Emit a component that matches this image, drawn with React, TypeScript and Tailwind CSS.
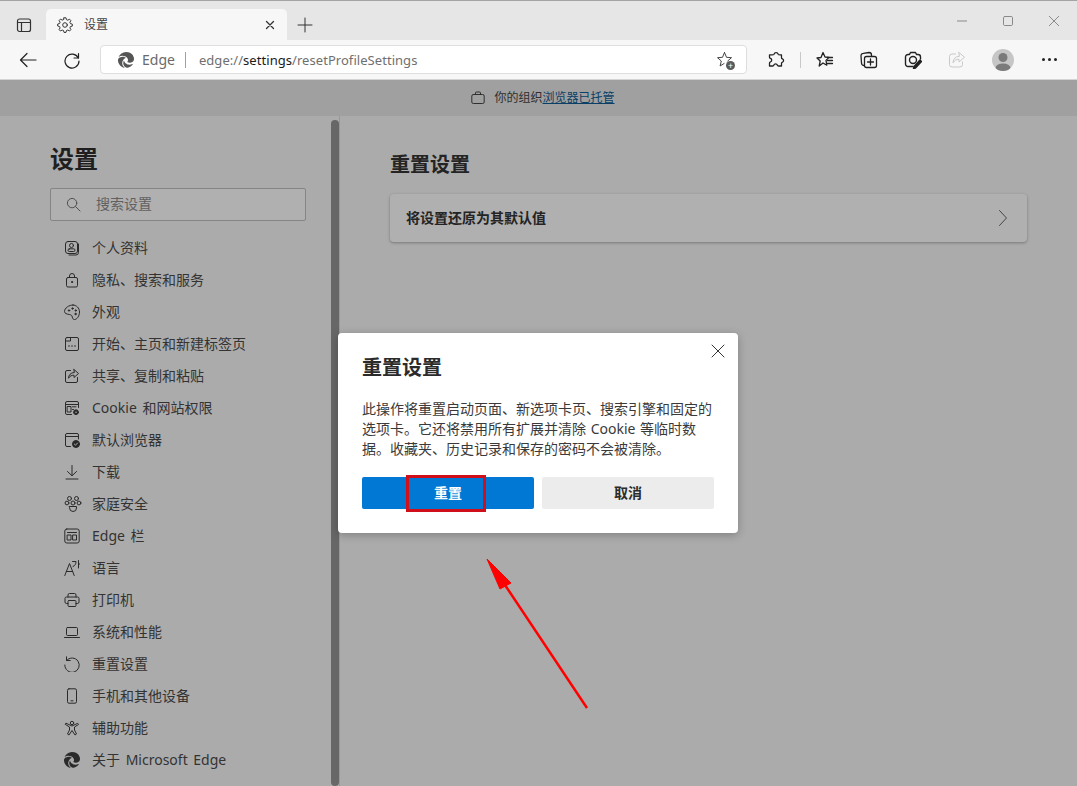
import type { ReactNode } from "react"

const fontStack = { fontFamily: '"Noto Sans", "Noto Sans CJK SC", sans-serif' }

function Ico({ size = 16, view = 16, sw = 1, children }: { size?: number; view?: number; sw?: number; children: ReactNode }) {
  return (
    <svg
      width={size}
      height={size}
      viewBox={`0 0 ${view} ${view}`}
      fill="none"
      stroke="currentColor"
      strokeWidth={sw}
      strokeLinecap="round"
      strokeLinejoin="round"
      className="shrink-0"
    >
      {children}
    </svg>
  )
}

function EdgeLogo({ className }: { className?: string }) {
  return (
    <svg width="16" height="16" viewBox="0 0 24 24" fill="currentColor" className={className}>
      <path d="M21.86 17.86q.14 0 .25.12.1.13.1.25t-.11.33l-.32.46-.43.53-.44.5q-.21.25-.38.42l-.22.23q-.58.53-1.34 1.04-.76.51-1.6.91-.86.4-1.74.64t-1.67.24q-.9 0-1.69-.28-.8-.28-1.48-.78-.68-.5-1.22-1.17-.53-.66-.92-1.44-.38-.77-.58-1.6-.2-.83-.2-1.67 0-1 .32-1.96.33-.97.87-1.8.14.95.55 1.77.41.82 1.02 1.5.6.68 1.38 1.21.78.54 1.64.9.86.36 1.77.56.92.2 1.8.2 1.12 0 2.18-.24 1.06-.23 2.06-.72l.2-.1.2-.05zm-15.5-1.27q0 1.1.27 2.15.27 1.06.78 2.03.51.96 1.24 1.77.74.82 1.66 1.4-1.47-.2-2.8-.74-1.33-.55-2.48-1.37-1.15-.83-2.08-1.9-.92-1.07-1.58-2.33T.36 14.94Q0 13.54 0 12.06q0-.81.32-1.49.31-.68.83-1.23.53-.55 1.2-.96.66-.4 1.35-.66.74-.27 1.5-.39.78-.12 1.55-.12.7 0 1.42.1.72.12 1.4.35.68.23 1.32.57.63.35 1.16.83-.35 0-.7.07-.33.07-.65.23v-.02q-.63.28-1.2.74-.57.46-1.05 1.04-.48.58-.87 1.26-.38.67-.65 1.39-.27.71-.42 1.44-.15.72-.15 1.38zM11.96.06q1.7 0 3.33.39 1.63.38 3.07 1.15 1.43.77 2.62 1.93 1.18 1.16 1.98 2.7.49.94.76 1.96.28 1 .28 2.08 0 .89-.23 1.7-.24.8-.69 1.48-.45.68-1.1 1.22-.64.53-1.45.88-.54.24-1.11.36-.58.13-1.16.13-.42 0-.97-.03-.54-.03-1.1-.12-.55-.1-1.05-.28-.5-.19-.84-.5-.12-.09-.23-.24-.1-.16-.1-.33 0-.15.16-.35.16-.2.35-.5.2-.28.36-.68.16-.4.16-.95 0-1.06-.4-1.96-.4-.91-1.06-1.64-.66-.74-1.52-1.28-.86-.55-1.79-.89-.84-.3-1.72-.44-.87-.14-1.76-.14-1.55 0-3.06.45T.94 7.55q.71-1.74 1.81-3.13 1.1-1.38 2.52-2.35Q6.68 1.1 8.37.58q1.7-.52 3.58-.52Z" />
    </svg>
  )
}

const gear =
  "M7 .8h2l.5 1.9 1.3.5 1.7-1 1.4 1.4-1 1.7.5 1.3 1.9.5v2l-1.900.5-.5 1.300 1 1.700-1.400 1.400-1.700-1-1.300.5-.5 1.900H7l-.5-1.900-1.300-.5-1.700 1-1.400-1.400 1-1.700-.5-1.300L.7 9V7l1.900-.5.5-1.300-1-1.700 1.400-1.400 1.700 1 1.300-.5z"

const navItems: { label: string; icon: ReactNode }[] = [
  {
    label: "个人资料",
    icon: (
      <Ico>
        <rect x="1.5" y="1.5" width="12" height="12" rx="2.5" />
        <path d="M14.5 4v8.5a2.5 2.5 0 0 1-2.5 2.5H5" />
        <circle cx="7.5" cy="5.5" r="2" />
        <rect x="4" y="8.8" width="7" height="2.7" rx="1.3" />
      </Ico>
    ),
  },
  {
    label: "隐私、搜索和服务",
    icon: (
      <Ico>
        <rect x="2.5" y="5.5" width="11" height="9.5" rx="1.5" />
        <path d="M5.5 5.5V4a2.5 2.5 0 0 1 5 0v1.5" />
        <circle cx="8" cy="10" r=".6" fill="currentColor" />
      </Ico>
    ),
  },
  {
    label: "外观",
    icon: (
      <Ico>
        <path d="M9 1c3.500 0 6.500 3 6.500 7s-2.500 7.500-5 7.500c-1.500 0-2-1.200-2.200-2.500-.3-1.800-1.300-2.200-3-2.500C3 10.200.5 9.500.5 7.500.5 4 5 1 9 1z" />
        <circle cx="5" cy="6.500" r=".7" fill="currentColor" />
        <circle cx="8.500" cy="4.500" r=".7" fill="currentColor" />
        <circle cx="11.800" cy="6.500" r=".7" fill="currentColor" />
        <circle cx="11.500" cy="10" r=".7" fill="currentColor" />
      </Ico>
    ),
  },
  {
    label: "开始、主页和新建标签页",
    icon: (
      <Ico>
        <rect x="1.5" y="1.5" width="13" height="13" rx="1.5" />
        <path d="M1.5 5h5V1.5" />
        <path d="M5 10h.01M8 10h.01M11 10h.01" strokeWidth="1.6" />
      </Ico>
    ),
  },
  {
    label: "共享、复制和粘贴",
    icon: (
      <Ico>
        <path d="M6.5 2.5H3A1.5 1.5 0 0 0 1.5 4v9A1.5 1.5 0 0 0 3 14.5h9a1.5 1.5 0 0 0 1.5-1.5V9.500" />
        <path d="M10 1.500l4.500 4-4.500 4V7.200c-2.500 0-4 .8-5.500 3 .2-3.200 2-5.500 5.500-5.700z" />
      </Ico>
    ),
  },
  {
    label: "Cookie 和网站权限",
    icon: (
      <Ico>
        <path d="M7.5 14.5H3A1.5 1.5 0 0 1 1.5 13V3A1.5 1.5 0 0 1 3 1.5h10A1.5 1.5 0 0 1 14.5 3v4.5" />
        <path d="M1.5 4.5h13" />
        <rect x="3.5" y="6.5" width="3.5" height="5.5" />
        <path d="M8.5 6.800h3.500M8.500 9.500h1" />
        <circle cx="12" cy="12.200" r="2.400" fill="currentColor" />
        <circle cx="12" cy="12.200" r=".8" fill="#ababab" stroke="none" />
      </Ico>
    ),
  },
  {
    label: "默认浏览器",
    icon: (
      <Ico>
        <path d="M6.5 14.5H3A1.5 1.5 0 0 1 1.5 13V3A1.5 1.5 0 0 1 3 1.5h10A1.5 1.5 0 0 1 14.5 3v4" />
        <path d="M1.5 4.5h13" />
        <circle cx="12" cy="12" r="3.5" fill="currentColor" />
        <path d="M10.300 12l1.200 1.200 2-2.200" stroke="#ababab" />
      </Ico>
    ),
  },
  {
    label: "下载",
    icon: (
      <Ico>
        <path d="M8 1.500v10M3.500 7.500L8 11.800l4.500-4.300M2 15h12" />
      </Ico>
    ),
  },
  {
    label: "家庭安全",
    icon: (
      <Ico size={18} view={18}>
        <circle cx="5.500" cy="3.500" r="2" />
        <circle cx="12.500" cy="3.500" r="2" />
        <circle cx="9" cy="8" r="2" />
        <circle cx="3" cy="8" r="1.900" />
        <circle cx="15" cy="8" r="1.900" />
        <path d="M5.500 11.500h7v1.500a3.500 3.500 0 0 1-7 0z" />
      </Ico>
    ),
  },
  {
    label: "Edge 栏",
    icon: (
      <Ico>
        <rect x=".8" y="1" width="14.4" height="14" rx="2" />
        <path d="M3.500 4.500h9" />
        <rect x="3.500" y="7" width="3.500" height="5" />
        <rect x="9" y="7" width="3.500" height="5" />
      </Ico>
    ),
  },
  {
    label: "语言",
    icon: (
      <Ico>
        <path d="M.8 15.500L5.500 3.500l4.700 12M2.300 11.500h6.400" />
        <path d="M8.500 1.500h3.500c0 2.500-1 4.200-3 5M14.500.5v7.500M14.500 4H16" />
      </Ico>
    ),
  },
  {
    label: "打印机",
    icon: (
      <Ico>
        <path d="M4 5V3a1.500 1.500 0 0 1 1.500-1.500h5A1.500 1.500 0 0 1 12 3v2" />
        <path d="M4 11.500H2.500A1.500 1.500 0 0 1 1 10V6.500A1.500 1.500 0 0 1 2.500 5h11A1.500 1.500 0 0 1 15 6.500V10a1.500 1.500 0 0 1-1.500 1.500H12" />
        <rect x="4" y="8.500" width="8" height="6" rx="1" />
      </Ico>
    ),
  },
  {
    label: "系统和性能",
    icon: (
      <Ico>
        <rect x="2.500" y="3.500" width="11" height="8" rx="1" />
        <path d="M.5 13.500h15" />
      </Ico>
    ),
  },
  {
    label: "重置设置",
    icon: (
      <Ico>
        <path d="M2.500 .8v3.700h3.700" />
        <path d="M2.500 4.500A7.200 7.200 0 1 1 .8 9" />
      </Ico>
    ),
  },
  {
    label: "手机和其他设备",
    icon: (
      <Ico>
        <rect x="3.500" y=".8" width="9" height="14.4" rx="1.500" />
        <path d="M7 12.800h2" />
      </Ico>
    ),
  },
  {
    label: "辅助功能",
    icon: (
      <Ico>
        <circle cx="8" cy="3" r="1.700" />
        <path d="M1.500 4.500l4 2.500v3L3.500 14l1.500 1 3-4.500 3 4.500 1.500-1-2-4V7l4-2.500-.8-1.200L8 6 2.300 3.300z" />
      </Ico>
    ),
  },
  {
    label: "关于 Microsoft Edge",
    icon: <EdgeLogo className="shrink-0" />,
  },
]

function TabStrip() {
  return (
    <div className="h-[40px] shrink-0 bg-[#e6e6e6] border-t border-[#a3a3a3] flex items-end text-[#333333]">
      <div className="w-[46px] h-[31px] flex items-center pl-[16px]">
        <Ico sw={1.2}>
          <rect x="1.500" y="2" width="13" height="12.500" rx="2" />
          <path d="M1.500 5.500h13M5.500 5.500v9" />
        </Ico>
      </div>
      <div className="w-[241px] h-[31px] bg-[#f7f7f7] rounded-t-[5px] flex items-center pl-[11px] pr-[10px]">
        <Ico>
          <path d={gear} />
          <circle cx="8" cy="8" r="2.300" />
        </Ico>
        <span className="ml-[11px] text-[12px] leading-[16px] text-[#444444]">设置</span>
        <span className="ml-auto flex">
          <Ico size={14} view={14}>
            <path d="M3.500 3.500l7 7M10.500 3.500l-7 7" strokeWidth="1.300" />
          </Ico>
        </span>
      </div>
      <div className="ml-[10px] h-[31px] flex items-center">
        <Ico>
          <path d="M8 1v14M1 8h14" />
        </Ico>
      </div>
      <div className="ml-auto h-[39px] flex items-center pr-[18px] text-[#8a8a8a] gap-[36px]">
        <Ico size={10} view={10}>
          <path d="M0 5h10" />
        </Ico>
        <Ico size={10} view={10}>
          <rect x=".5" y=".5" width="9" height="9" rx="1.200" />
        </Ico>
        <Ico size={10} view={10}>
          <path d="M.3.300l9.400 9.400M9.700.300L.3 9.700" />
        </Ico>
      </div>
    </div>
  )
}

function Toolbar() {
  return (
    <div className="h-[40px] shrink-0 bg-[#f7f7f7] border-b border-[#d4d4d4] flex items-center text-[#222222]">
      <div className="w-[100px] shrink-0 flex items-center pl-[19px] gap-[26px]">
        <Ico size={18} view={18} sw={1.2}>
          <path d="M17 9H1.500M8 2.500L1.500 9 8 15.500" />
        </Ico>
        <Ico size={18} view={18} sw={1.2}>
          <path d="M15.500 2.500v4.500H11" />
          <path d="M15.300 7A7 7 0 1 0 16 10" />
        </Ico>
      </div>
      <div className="w-[647px] h-[29px] bg-white rounded-[4px] border border-[#dedede] flex items-center pl-[17px] pr-[12px]">
        <EdgeLogo className="text-[#555555] shrink-0" />
        <span className="ml-[8px] text-[14px] leading-[20px] text-[#6a6a6a]">Edge</span>
        <span className="ml-[10px] w-px h-[16px] bg-[#a0a0a0]" />
        <span className="ml-[13px] text-[13px] tracking-[0.05px] leading-[20px] text-[#6f6f6f] whitespace-nowrap">
          edge://<span className="text-[#1a1a1a]">settings</span>/resetProfileSettings
        </span>
        <span className="ml-auto text-[#444444] relative flex">
          <Ico size={18} view={18}>
            <path d="M8.500 1.500l2 4.800 5 .4-3.800 3.300" />
            <path d="M8.500 1.500l-2 4.800-5 .4 3.800 3.300-1.200 5 4-2.500" />
          </Ico>
          <span className="absolute right-[-1px] bottom-[-1px] w-[9px] h-[9px] rounded-full bg-[#5a5a5a] text-white text-[9px] leading-[9px] text-center">+</span>
        </span>
      </div>
      <div className="ml-[20px] flex items-center">
        <Ico size={18} view={18} sw={1.3}>
          <path d="M7 3.200a2.200 2.200 0 0 1 4.200 0c.3.7 1 .7 1.800.7h1.500v2.800c0 .7.3 1 1 1.200a1.800 1.800 0 0 1 0 3.300c-.7.2-1 .5-1 1.200v2.600h-3c-.7 0-1-.3-1.200-1a1.800 1.800 0 0 0-3.400 0c-.2.7-.5 1-1.200 1H2.500v-3c0-.7.3-1 1-1.200a1.800 1.800 0 0 0 0-3.400c-.7-.2-1-.5-1-1.200V3.900H5c.9 0 1.700 0 2-.7z" />
        </Ico>
        <span className="ml-[15px] w-px h-[16px] bg-[#c8c8c8]" />
        <span className="ml-[15px] flex">
          <Ico size={18} view={18} sw={1.3}>
            <path d="M7 1.500L9 6l4 .4-3 3 .8 4.800L7 12l-3.800 3 1-5-3.200-3L5 6.500z" />
            <path d="M11.500 6.500h5M11.500 9.500h5M11.500 12.500h5" />
          </Ico>
        </span>
        <span className="ml-[26px] flex">
          <Ico size={18} view={18} sw={1.3}>
            <path d="M4 14.500A2.500 2.500 0 0 1 1.500 12L1 5a2.500 2.500 0 0 1 2.300-2.700L9 1.500A2.500 2.500 0 0 1 11.500 4v1" />
            <rect x="4.500" y="5.500" width="12" height="11" rx="2" />
            <path d="M10.500 8v6M7.500 11h6" />
          </Ico>
        </span>
        <span className="ml-[26px] flex">
          <Ico size={18} view={18} sw={1.4}>
            <path d="M9 15.500H4A2.500 2.500 0 0 1 1.500 13V6A2.500 2.500 0 0 1 4 3.500h1.500l1-2h5l1 2H14A2.500 2.500 0 0 1 16.500 6v2" />
            <circle cx="9" cy="9" r="3.500" />
            <path d="M10 15.500l6-6.500 1.500 1.500-6 6.500-2 .5z" fill="currentColor" />
          </Ico>
        </span>
        <span className="ml-[26px] flex text-[#c9c9c9]">
          <Ico size={18} view={18}>
            <path d="M7.500 3H4A2.500 2.500 0 0 0 1.500 5.500v8A2.500 2.500 0 0 0 4 16h8a2.500 2.500 0 0 0 2.500-2.500V11" />
            <path d="M11 1.500l5.500 4.700-5.500 4.800V8.300c-2.500 0-4.500 1-6 3.500.2-4 2.500-6.300 6-6.500z" />
          </Ico>
        </span>
        <span className="ml-[26px] w-[22px] h-[22px] rounded-full bg-[#c6c6c6] flex items-center justify-center overflow-hidden">
          <svg width="22" height="22" viewBox="0 0 22 22" className="text-[#7b7b7b]">
            <circle cx="11" cy="8.500" r="4.500" fill="currentColor" />
            <ellipse cx="11" cy="19" rx="7.500" ry="4.500" fill="currentColor" />
          </svg>
        </span>
        <span className="ml-[28px] flex gap-[3px]">
          <span className="w-[3px] h-[3px] rounded-full bg-[#222222]" />
          <span className="w-[3px] h-[3px] rounded-full bg-[#222222]" />
          <span className="w-[3px] h-[3px] rounded-full bg-[#222222]" />
        </span>
      </div>
    </div>
  )
}

function Banner() {
  return (
    <div className="h-[36px] shrink-0 bg-[#a0a0a0] flex items-center justify-center pl-[9px] text-[12px] leading-[16px] text-[#2f2f2f]">
      <span className="mr-[9px] flex">
        <Ico size={14} view={14}>
          <rect x=".8" y="3.500" width="12.4" height="9" rx="1.500" />
          <path d="M4.500 3.500V2a1 1 0 0 1 1-1h3a1 1 0 0 1 1 1v1.500" />
        </Ico>
      </span>
      <span>你的组织</span>
      <span className="text-[#0a3f66] underline">浏览器已托管</span>
    </div>
  )
}

function Sidebar() {
  return (
    <aside className="w-[331px] shrink-0 pl-[50px] pr-[25px] pt-[27px]">
      <h1 className="text-[24px] leading-[32px] font-bold text-[#1f1f1f]">设置</h1>
      <div className="mt-[13px] h-[33px] border border-[#858585] rounded-[2px] bg-[#b0b0b0] flex items-center pl-[15px] text-[#4a4a4a]">
        <Ico size={15} view={16}>
          <circle cx="6.500" cy="6.500" r="5" />
          <path d="M10.200 10.200L15 15" />
        </Ico>
        <span className="ml-[15px] mb-[2px] text-[14px] leading-[20px] text-[#616161]">搜索设置</span>
      </div>
      <nav className="mt-[11px] flex flex-col">
        {navItems.map((item) => (
          <div key={item.label} className="h-8 flex items-center text-[#2a2a2a]">
            <span className="w-[42px] pl-[14px] flex items-center">{item.icon}</span>
            <span className="text-[14px] leading-[20px] text-[#333333] whitespace-nowrap [word-spacing:2px]">{item.label}</span>
          </div>
        ))}
      </nav>
    </aside>
  )
}

export default function App() {
  return (
    <div className="relative w-[1077px] h-[786px] overflow-hidden flex flex-col bg-[#ababab]" style={fontStack}>
      <TabStrip />
      <Toolbar />
      <Banner />
      <div className="flex flex-1 min-h-0">
        <Sidebar />
        <div className="w-[8px] shrink-0 mt-[4px] bg-[#676767] rounded-[4px]" />
        <div className="w-px shrink-0 bg-[#989898]" />
        <main className="flex-1 pl-[50px] pr-[50px] pt-[35px]">
          <h2 className="text-[20px] leading-[28px] font-bold text-[#242424]">重置设置</h2>
          <div className="mt-[15px] h-[48px] bg-[#b0b0b0] rounded-[4px] shadow-[0_1px_3px_rgba(0,0,0,0.3)] flex items-center pl-[16px] pr-[16px]">
            <span className="text-[14px] leading-[20px] font-bold text-[#242424]">将设置还原为其默认值</span>
            <span className="ml-auto flex text-[#444444]">
              <Ico>
                <path d="M4.500 .5l7 7.500-7 7.500" />
              </Ico>
            </span>
          </div>
        </main>
      </div>

      {/* reset dialog */}
      <div className="absolute left-[338px] top-[333px] w-[400px] h-[200px] bg-white rounded-[4px] shadow-[0_2px_8px_rgba(0,0,0,0.25)] px-[24px] pt-[21px]">
        <span className="absolute right-[13px] top-[11px] flex text-[#333333]">
          <Ico size={14} view={14}>
            <path d="M1 1l12 12M13 1L1 13" />
          </Ico>
        </span>
        <h3 className="text-[20px] leading-[28px] font-bold text-[#2b2b2b]">重置设置</h3>
        <p className="mt-[17px] text-[14px] leading-[20px] text-[#3a3a3a] whitespace-nowrap [word-spacing:1px]">
          此操作将重置启动页面、新选项卡页、搜索引擎和固定的
          <br />
          选项卡。它还将禁用所有扩展并清除 Cookie 等临时数
          <br />
          据。收藏夹、历史记录和保存的密码不会被清除。
        </p>
        <div className="mt-[18px] flex gap-[8px]">
          <button className="w-[172px] h-[32px] bg-[#0078d4] rounded-[2px] text-white text-[14px] leading-[20px] font-bold">
            重置
          </button>
          <button className="w-[172px] h-[32px] bg-[#ececec] rounded-[2px] text-[#2b2b2b] text-[14px] leading-[20px] font-bold">
            取消
          </button>
        </div>
      </div>

      {/* annotation on top of the screenshot */}
      <div className="absolute left-[406px] top-[475px] w-[80px] h-[37px] border-[3px] border-[#d10f1a]" />
      <svg className="absolute left-0 top-0 pointer-events-none" width="1077" height="786" viewBox="0 0 1077 786">
        <path d="M587 708L505 585" stroke="#ff0000" strokeWidth="2.5" />
        <path d="M487 559L511 583L500 589Z" fill="#ff0000" stroke="#ff0000" strokeWidth="1" strokeLinejoin="round" />
      </svg>
    </div>
  )
}
